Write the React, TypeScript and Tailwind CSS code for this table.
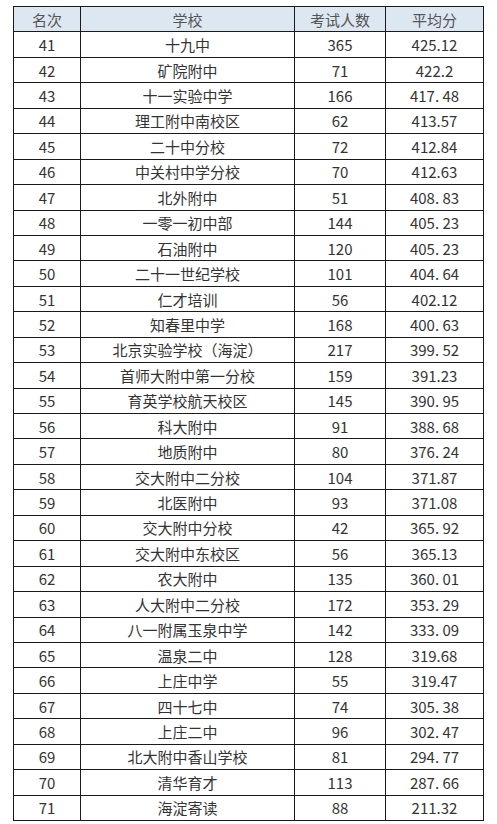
import React from "react";

const rows: [string, string, string, string][] = [
  ["41", "十九中", "365", "425.12"],
  ["42", "矿院附中", "71", "422.2"],
  ["43", "十一实验中学", "166", "417. 48"],
  ["44", "理工附中南校区", "62", "413.57"],
  ["45", "二十中分校", "72", "412.84"],
  ["46", "中关村中学分校", "70", "412.63"],
  ["47", "北外附中", "51", "408. 83"],
  ["48", "一零一初中部", "144", "405. 23"],
  ["49", "石油附中", "120", "405. 23"],
  ["50", "二十一世纪学校", "101", "404. 64"],
  ["51", "仁才培训", "56", "402.12"],
  ["52", "知春里中学", "168", "400. 63"],
  ["53", "北京实验学校（海淀）", "217", "399. 52"],
  ["54", "首师大附中第一分校", "159", "391.23"],
  ["55", "育英学校航天校区", "145", "390. 95"],
  ["56", "科大附中", "91", "388. 68"],
  ["57", "地质附中", "80", "376. 24"],
  ["58", "交大附中二分校", "104", "371.87"],
  ["59", "北医附中", "93", "371.08"],
  ["60", "交大附中分校", "42", "365. 92"],
  ["61", "交大附中东校区", "56", "365.13"],
  ["62", "农大附中", "135", "360. 01"],
  ["63", "人大附中二分校", "172", "353. 29"],
  ["64", "八一附属玉泉中学", "142", "333. 09"],
  ["65", "温泉二中", "128", "319.68"],
  ["66", "上庄中学", "55", "319.47"],
  ["67", "四十七中", "74", "305. 38"],
  ["68", "上庄二中", "96", "302. 47"],
  ["69", "北大附中香山学校", "81", "294. 77"],
  ["70", "清华育才", "113", "287. 66"],
  ["71", "海淀寄读", "88", "211.32"],
];

const header = ["名次", "学校", "考试人数", "平均分"];

const App = () => {
  return (
    <div
      className="bg-white min-h-screen pt-[6px] pl-[13px] text-[15px] text-[#333]"
      style={{ fontFamily: '"Noto Sans CJK SC", "Noto Sans", sans-serif' }}
    >
      {/* Score table */}
      <div className="grid grid-cols-[67px_214px_91px_98px] grid-rows-[repeat(32,minmax(0,1fr))] h-[815px] w-[471px] border-l border-t border-[#1a1a1a]">
        {header.map((h) => (
          <div
            key={h}
            className="bg-[#dde7f2] text-[#555] border-r border-b border-[#1a1a1a] flex items-center justify-center leading-none"
          >
            {h}
          </div>
        ))}
        {rows.map((r) =>
          r.map((cell, i) => (
            <div
              key={r[0] + "-" + i}
              className="border-r border-b border-[#1a1a1a] flex items-center justify-center leading-none whitespace-pre"
            >
              {cell}
            </div>
          ))
        )}
      </div>
    </div>
  );
};

export default App;
